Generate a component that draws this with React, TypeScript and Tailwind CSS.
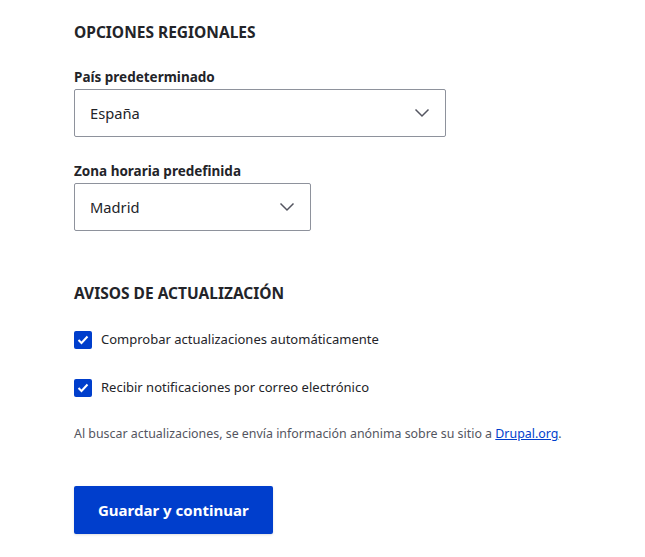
const Chevron = () => (
  <svg width="16" height="16" viewBox="0 0 16 16" fill="none" className="shrink-0">
    <path d="M1.5 4.5l6.5 6.5 6.5-6.5" stroke="#545560" strokeWidth="1.5" />
  </svg>
);

function Select({ value, width }: { value: string; width: string }) {
  return (
    <div
      className={`${width} h-[48px] flex items-center justify-between border border-[#8e929c] rounded-[2px] bg-white pl-[15px] pr-[15px] text-[14.7px] text-[#232429]`}
    >
      <span>{value}</span>
      <Chevron />
    </div>
  );
}

function Check({ label }: { label: string }) {
  return (
    <label className="h-[20px] flex items-center gap-[9px] text-[13px] text-[#232429]">
      <span className="w-[18px] h-[18px] rounded-[2px] bg-[#003ecc] flex items-center justify-center">
        <svg width="12" height="10" viewBox="0 0 12 10" fill="none">
          <path d="M1.5 5l3 3L10.5 1.5" stroke="white" strokeWidth="2" />
        </svg>
      </span>
      {label}
    </label>
  );
}

export default function App() {
  return (
    <div
      className="w-[645px] h-[557px] bg-white pl-[74px] pt-[22px] text-[#232429]"
      style={{ fontFamily: '"Noto Sans", "Open Sans", sans-serif' }}
    >
      {/* Regional */}
      <h2 className="text-[15.5px] font-bold leading-[20px]">OPCIONES REGIONALES</h2>

      <div className="mt-[26px]">
        <div className="text-[13.5px] font-bold leading-[18px] mb-[3px]">País predeterminado</div>
        <Select value="España" width="w-[372px]" />
      </div>

      <div className="mt-[25px]">
        <div className="text-[13.5px] font-bold leading-[18px] mb-[3px]">Zona horaria predefinida</div>
        <Select value="Madrid" width="w-[237px]" />
      </div>

      {/* Updates */}
      <h2 className="mt-[52px] text-[15.5px] font-bold leading-[20px]">AVISOS DE ACTUALIZACIÓN</h2>

      <div className="mt-[27px] flex flex-col gap-[28px]">
        <Check label="Comprobar actualizaciones automáticamente" />
        <Check label="Recibir notificaciones por correo electrónico" />
      </div>

      <p className="mt-[28px] text-[12.4px] text-[#545560] leading-[16px]">
        Al buscar actualizaciones, se envía información anónima sobre su sitio a{" "}
        <a href="#" className="text-[#003ecc] underline">Drupal.org</a>.
      </p>

      <div className="mt-[44px]">
        <button className="h-[48px] px-[24px] bg-[#003ecc] text-white text-[15px] font-bold rounded-[2px] shadow-sm">
          Guardar y continuar
        </button>
      </div>
    </div>
  );
}
